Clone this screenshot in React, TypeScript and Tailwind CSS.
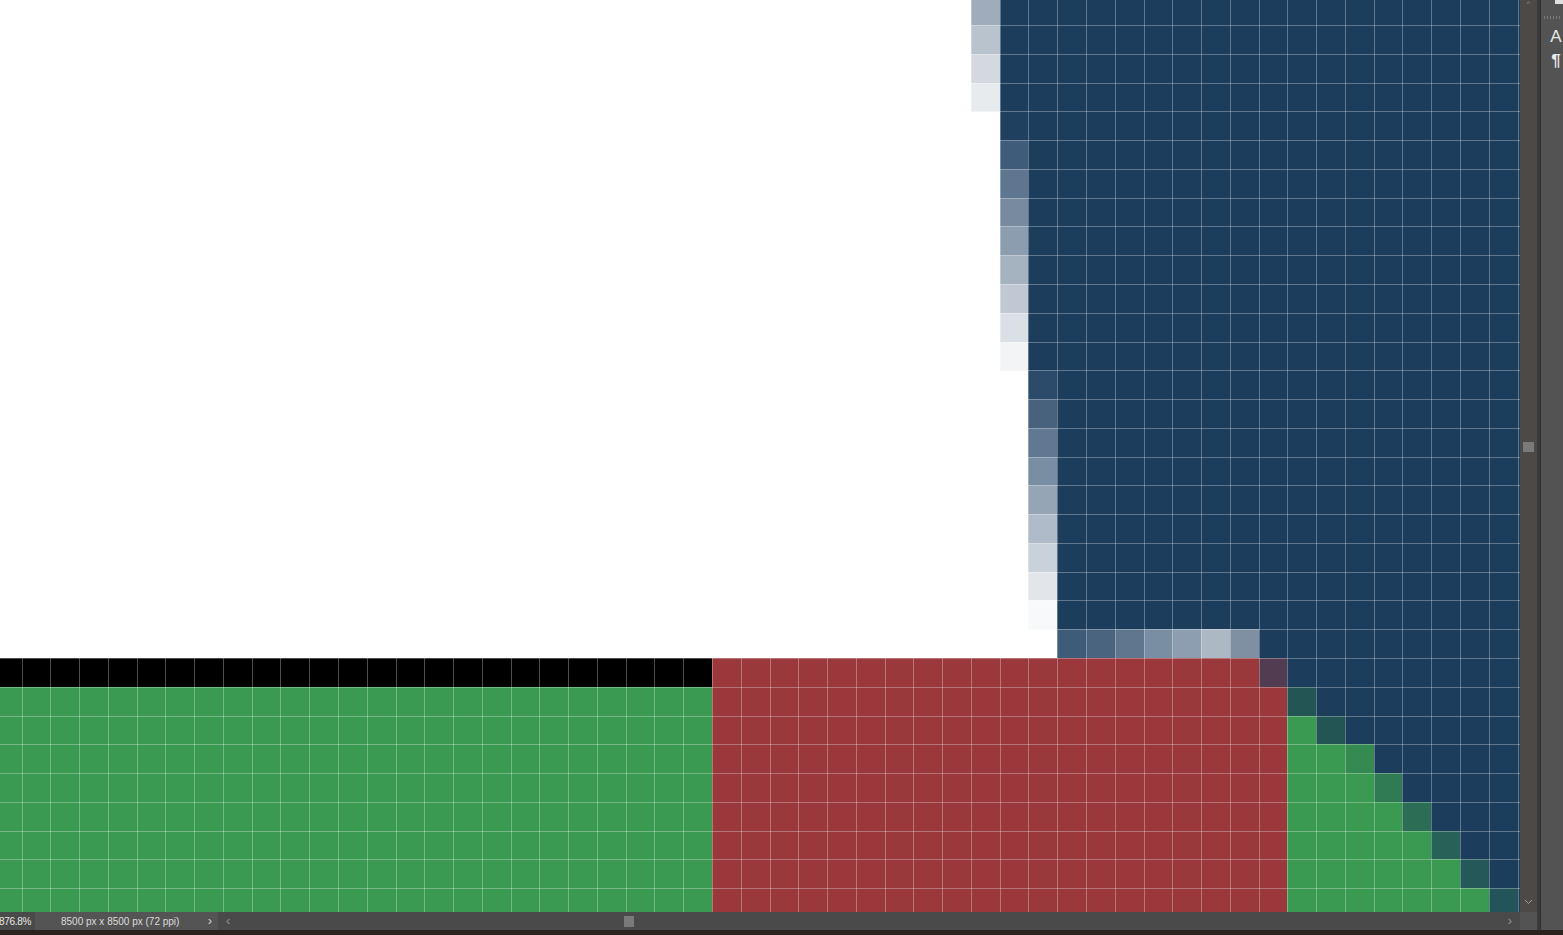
const CELL = 28.768;
const OX = -7.2;
const OY = -3.67;
const COLS = 54;
const ROWS = 32;

const WHITE = "#ffffff";
const BLUE = "#1d3d5c";
const RED = "#9a383b";
const GREEN = "#3a9a51";
const BLACK = "#000000";

const col34 = ["#9eacbc", "#b8c3ce", "#d3d9df", "#e8ebee"];
const col35 = ["#3f5c7a", "#5e7690", "#778aa0", "#8c9db0", "#a5b2c0", "#c0c9d3", "#dbe0e6", "#f2f4f6"];
const col36 = ["#2c4a69", "#48627e", "#607891", "#7a8ea3", "#95a5b6", "#afbbc8", "#c9d1da", "#e2e6eb", "#f8f9fa"];
const row22 = ["#3e5b79", "#4a6480", "#5e778f", "#7a8ea3", "#8d9eb0", "#adb8c5", "#7f90a2"];
const greenEdge: Record<number, string> = {
  24: "#235555",
  25: "#235555",
  26: "#358a52",
  27: "#307b53",
  28: "#2c6e55",
  29: "#286158",
  30: "#255859",
  31: "#23545a",
};

function cellColor(c: number, r: number): string {
  if (r >= 23) {
    if (c <= 24) return r === 23 ? BLACK : GREEN;
    if (c <= 44) return r === 23 && c === 44 ? "#523c52" : RED;
    if (r === 23) return BLUE;
    const edge = 45 + (r - 24);
    if (c < edge) return GREEN;
    if (c === edge) return greenEdge[r];
    return BLUE;
  }
  if (r === 22) {
    if (c <= 36) return WHITE;
    if (c <= 43) return row22[c - 37];
    return BLUE;
  }
  if (c <= 33) return WHITE;
  if (c === 34) return r <= 3 ? col34[r] : WHITE;
  if (c === 35) {
    if (r <= 3) return BLUE;
    if (r === 4) return "#20405f";
    if (r <= 12) return col35[r - 5];
    return WHITE;
  }
  if (c === 36) {
    if (r <= 12) return BLUE;
    if (r <= 21) return col36[r - 13];
    return WHITE;
  }
  return BLUE;
}

function PixelCanvas() {
  const cells = [];
  for (let r = 0; r < ROWS; r++) {
    for (let c = 0; c < COLS; c++) {
      const fill = cellColor(c, r);
      if (fill === WHITE) continue;
      cells.push(
        <rect
          key={`${c}-${r}`}
          x={OX + c * CELL}
          y={OY + r * CELL}
          width={CELL + 0.6}
          height={CELL + 0.6}
          fill={fill}
        />
      );
    }
  }

  const lines = [];
  for (let c = 1; c < COLS; c++) {
    const x = Math.round(OX + c * CELL) + 0.5;
    lines.push(<line key={`v${c}`} x1={x} y1={0} x2={x} y2={912} />);
  }
  for (let r = 1; r < ROWS; r++) {
    const y = Math.round(OY + r * CELL) + 0.5;
    lines.push(<line key={`h${r}`} x1={0} y1={y} x2={1520} y2={y} />);
  }

  return (
    <svg width={1520} height={912} className="block shrink-0 bg-white" shapeRendering="crispEdges">
      {cells}
      <g stroke="rgba(255,255,255,0.3)" strokeWidth={1}>
        {lines}
      </g>
    </svg>
  );
}

export default function App() {
  return (
    <div
      className="flex h-[935px] w-[1563px] flex-col overflow-hidden bg-[#2a231f] text-[#d6d6d6]"
      style={{ fontFamily: "'Liberation Sans', Arial, sans-serif" }}
    >
      <div className="flex h-[930px]">
        {/* document area */}
        <div className="flex w-[1537px] flex-col">
          <div className="flex h-[912px]">
            <PixelCanvas />
            <div className="flex w-[17px] flex-col items-center bg-[#4d4947]">
              <span className="h-[4px] text-[8px] leading-none text-[#8a8a8a]">^</span>
              <div className="mt-[438px] h-[10px] w-[11px] bg-[#7a7a7a]" />
              <div className="flex-1" />
              <svg width="9" height="6" viewBox="0 0 9 6" className="mb-[7px]">
                <path d="M1 1 L4.5 4.5 L8 1" fill="none" stroke="#9a9a9a" strokeWidth="1" />
              </svg>
            </div>
          </div>
          <div className="flex h-[18px] items-center bg-[#4a4a4a] text-[10px]">
            <div className="flex h-full w-[35px] items-center justify-end overflow-hidden bg-[#4a4a4a] pr-[4px] text-[#e6e6e6]">
              <span className="whitespace-nowrap tracking-[-0.3px]">876.8%</span>
            </div>
            <div className="flex h-full w-[183px] items-center bg-[#545454] pl-[26px] text-[#dcdcdc]">
              <span className="flex-1 whitespace-nowrap">8500 px x 8500 px (72 ppi)</span>
              <span className="pr-[6px] text-[13px] text-[#cfcfcf]">›</span>
            </div>
            <div className="flex h-full flex-1 items-center bg-[#4a4a4a]">
              <span className="pl-[8px] text-[13px] text-[#8f8f8f]">‹</span>
              <div className="ml-[394px] h-[11px] w-[10px] bg-[#7a7a7a]" />
              <div className="flex-1" />
              <span className="pr-[8px] text-[13px] text-[#8f8f8f]">›</span>
              <div className="h-full w-[17px] bg-[#535353]" />
            </div>
          </div>
        </div>
        {/* divider */}
        <div className="w-[3px] bg-[#3a3a3a]" />
        {/* right panel strip */}
        <div className="flex flex-1 flex-col items-center border-l border-[#2f2f2f] bg-[#535353]">
          <div className="ml-auto h-[4px] w-[8px] bg-[#e0e0e0]" />
          <div className="mt-[12px] h-[3px] w-[16px] [background:repeating-linear-gradient(90deg,#7a7a7a_0_1px,transparent_1px_3px)]" />
          <span className="mt-[9px] pl-[8px] text-[17px] leading-none text-[#e8e8e8]">A</span>
          <span className="mt-[7px] pl-[8px] text-[17px] font-bold leading-none text-[#e8e8e8]">¶</span>
        </div>
      </div>
      <div className="h-[5px] bg-[#2a231f]" />
    </div>
  );
}
